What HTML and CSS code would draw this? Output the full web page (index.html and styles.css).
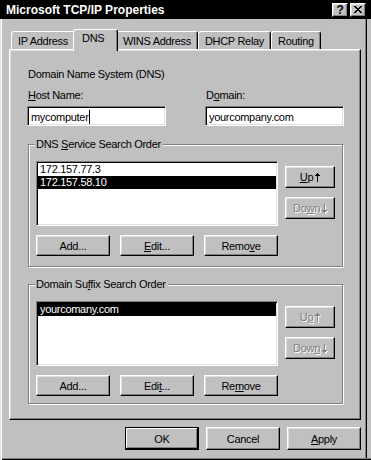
FILE: index.html
```html
<!DOCTYPE html>
<html lang="en">
<head>
    <meta charset="UTF-8">
    <title>Microsoft TCP/IP Properties</title>
    <link rel="stylesheet" href="styles.css">
</head>
<body>
    <div class="window">
        <div class="titlebar">
            <span class="title">Microsoft TCP/IP Properties</span>
            <div class="title-buttons">
                <span class="tbtn help">?</span>
                <span class="tbtn">
                    <svg width="8" height="7" viewBox="0 0 8 7"><path d="M0 0h2v1h1v1h2V1h1V0h2v1H7v1H6v1H5v1h1v1h1v1h1v1H6V6H5V5H3v1H2v1H0V6h1V5h1V4h1V3H2V2H1V1H0z" fill="#000"/></svg>
                </span>
            </div>
        </div>

        <div class="tabs">
            <div class="tab">IP Address</div>
            <div class="tab active">DNS</div>
            <div class="tab">WINS Address</div>
            <div class="tab">DHCP Relay</div>
            <div class="tab">Routing</div>
        </div>

        <div class="panel">
            <div class="caption">Domain Name System (DNS)</div>
            <div class="fields">
                <div class="field">
                    <div class="label"><u>H</u>ost Name:</div>
                    <div class="input">mycomputer<span class="caret"></span></div>
                </div>
                <div class="field">
                    <div class="label">D<u>o</u>main:</div>
                    <div class="input">yourcompany.com</div>
                </div>
            </div>

            <div class="group">
                <span class="legend">DNS <u>S</u>ervice Search Order</span>
                <div class="group-body">
                    <div class="list">
                        <div class="item">172.157.77.3</div>
                        <div class="item selected">172.157.58.10</div>
                    </div>
                    <div class="side">
                        <div class="btn"><u>U</u>p<svg class="arrow" width="5" height="9" viewBox="0 0 5 9"><path d="M2 0h1v1h1v1h1v1H3v6H2V3H0V2h1V1h1z"/></svg></div>
                        <div class="btn disabled">Do<u>w</u>n<svg class="arrow" width="5" height="9" viewBox="0 0 5 9"><path d="M2 0h1v6h2v1H4v1H3v1H2V8H1V7H0V6h2z"/></svg></div>
                    </div>
                </div>
                <div class="row">
                    <div class="btn">Add...</div>
                    <div class="btn"><u>E</u>dit...</div>
                    <div class="btn">Remo<u>v</u>e</div>
                </div>
            </div>

            <div class="group second">
                <span class="legend">Domain Su<u>f</u>fix Search Order</span>
                <div class="group-body">
                    <div class="list">
                        <div class="item selected">yourcomany.com</div>
                    </div>
                    <div class="side">
                        <div class="btn disabled">U<u>p</u><svg class="arrow" width="5" height="9" viewBox="0 0 5 9"><path d="M2 0h1v1h1v1h1v1H3v6H2V3H0V2h1V1h1z"/></svg></div>
                        <div class="btn disabled">Dow<u>n</u><svg class="arrow" width="5" height="9" viewBox="0 0 5 9"><path d="M2 0h1v6h2v1H4v1H3v1H2V8H1V7H0V6h2z"/></svg></div>
                    </div>
                </div>
                <div class="row">
                    <div class="btn">Add...</div>
                    <div class="btn">Edi<u>t</u>...</div>
                    <div class="btn">Re<u>m</u>ove</div>
                </div>
            </div>
        </div>

        <div class="actions">
            <div class="btn default">OK</div>
            <div class="btn">Cancel</div>
            <div class="btn"><u>A</u>pply</div>
        </div>
    </div>
</body>
</html>
```

FILE: styles.css
```css
body {
    margin: 0;
    background: #c0c0c0;
    font-family: "Liberation Sans", Arial, sans-serif;
    font-size: 11px;
    letter-spacing: -0.3px;
    color: #000;
}
.window {
    width: 371px;
    height: 460px;
    box-sizing: border-box;
    background: #c0c0c0;
    box-shadow: inset 1px 0 #dfdfdf, inset 2px 0 #fff, inset 0 -1px #000, inset 0 -2px #808080,
        inset -4px 0 #c0c0c0, inset -5px 0 #000, inset -6px 0 #808080;
    overflow: hidden;
}
.titlebar {
    height: 19px;
    background: #000;
    color: #fff;
    display: flex;
    align-items: center;
    justify-content: space-between;
    padding: 0 5px 0 6px;
}
.title {
    font-size: 12px;
    font-weight: bold;
    letter-spacing: 0;
}
.title-buttons {
    display: flex;
    gap: 2px;
}
.tbtn {
    width: 16px;
    height: 14px;
    box-sizing: border-box;
    background: #c0c0c0;
    color: #000;
    border: 1px solid;
    border-color: #fff #000 #000 #fff;
    box-shadow: inset -1px -1px #808080, inset 1px 1px #dfdfdf;
    display: flex;
    align-items: center;
    justify-content: center;
}
.tbtn.help {
    font-weight: bold;
    font-size: 12px;
    line-height: 12px;
}
.tabs {
    display: flex;
    align-items: flex-end;
    height: 20px;
    margin: 10px 0 0 11px;
    position: relative;
    z-index: 1;
}
.tab {
    height: 18px;
    box-sizing: border-box;
    padding: 3px 6px 0;
    min-width: 41px;
    border: 1px solid #fff;
    border-bottom: none;
    border-right-color: #000;
    border-radius: 3px 3px 0 0;
    box-shadow: inset -1px 0 #808080;
    background: #c0c0c0;
}
.tab.active {
    height: 22px;
    min-width: 45px;
    margin: 0 -2px -2px;
    padding: 2px 8px 0;
    position: relative;
}
.panel {
    margin-left: 9px;
    width: 352px;
    height: 371px;
    box-sizing: border-box;
    border: 1px solid;
    border-color: #fff #000 #000 #fff;
    box-shadow: inset -1px -1px #808080, inset 1px 1px #dfdfdf;
    padding: 18px 16px 0 17px;
}
.caption {
    line-height: 13px;
    margin-left: 1px;
    margin-bottom: 8px;
}
.fields {
    display: flex;
    justify-content: space-between;
}
.field {
    width: 139px;
}
.label {
    line-height: 13px;
    margin: 0 0 4px 1px;
}
.input, .list {
    background: #fff;
    box-sizing: border-box;
    border: 1px solid;
    border-color: #808080 #fff #fff #808080;
    box-shadow: inset 1px 1px #000, inset -1px -1px #dfdfdf;
}
.input {
    height: 20px;
    padding: 2px 3px 0;
    line-height: 16px;
    white-space: nowrap;
}
.caret {
    display: inline-block;
    width: 1px;
    height: 14px;
    background: #000;
    vertical-align: -3px;
}
.group {
    position: relative;
    margin: 18px 1px 0;
    border: 1px solid #808080;
    box-shadow: inset 1px 1px #fff, 1px 1px #fff;
    padding: 16px 7px 10px;
}
.group.second {
    margin-top: 17px;
    padding-bottom: 7px;
}
.legend {
    position: absolute;
    top: -7px;
    left: 6px;
    padding: 0 2px 0 1px;
    line-height: 13px;
    background: #c0c0c0;
}
.group-body {
    display: flex;
    justify-content: space-between;
}
.list {
    width: 242px;
    height: 65px;
    padding: 1px 1px 0;
}
.item {
    line-height: 13px;
    padding-left: 2px;
}
.item.selected {
    background: #000;
    color: #fff;
}
.side {
    display: flex;
    flex-direction: column;
    gap: 9px;
    padding-top: 5px;
}
.side .btn {
    width: 50px;
    height: 22px;
}
.arrow {
    fill: currentColor;
    margin-left: 2px;
}
.btn.disabled .arrow {
    filter: drop-shadow(1px 1px 0 #fff);
}
.row {
    display: flex;
    justify-content: space-between;
    margin-top: 9px;
    width: 242px;
}
.row .btn {
    width: 74px;
    height: 21px;
}
.btn {
    box-sizing: border-box;
    background: #c0c0c0;
    border: 1px solid;
    border-color: #fff #000 #000 #fff;
    box-shadow: inset -1px -1px #808080, inset 1px 1px #dfdfdf;
    display: flex;
    align-items: center;
    justify-content: center;
    white-space: nowrap;
}
.btn.disabled {
    color: #808080;
    text-shadow: 1px 1px #fff;
}
.btn.default {
    border-color: #000;
    box-shadow: inset -1px -1px #000, inset 1px 1px #fff, inset -2px -2px #808080;
}
.actions {
    display: flex;
    justify-content: flex-end;
    gap: 7px;
    margin: 7px 10px 0 0;
}
.actions .btn {
    width: 74px;
    height: 23px;
}
```
